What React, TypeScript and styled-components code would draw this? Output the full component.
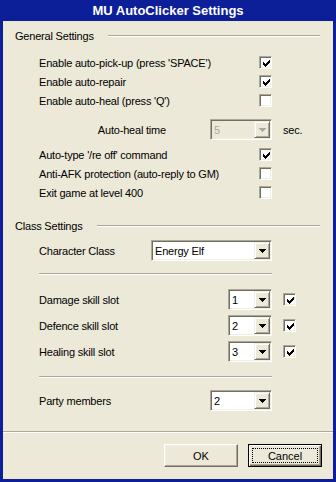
import React from 'react';
import styled, { createGlobalStyle } from 'styled-components';

const GlobalStyle = createGlobalStyle`
  html, body {
    margin: 0;
    padding: 0;
  }
  body {
    font-family: 'Liberation Sans', Arial, sans-serif;
    font-size: 11px;
  }
`;

const Window = styled.div`
  box-sizing: border-box;
  width: 336px;
  height: 482px;
  display: flex;
  flex-direction: column;
  padding: 0 3px 3px;
  background: #0c1e98;
`;

const TitleBar = styled.div`
  height: 21px;
  display: flex;
  align-items: center;
  justify-content: center;
  color: #ffffff;
  font-family: 'Liberation Sans', Arial, sans-serif;
  font-weight: 700;
  font-size: 13px;
`;

const Client = styled.div`
  flex: 1;
  display: flex;
  flex-direction: column;
  padding-top: 7px;
  background: #ece9d8;
  color: #000000;
  letter-spacing: -0.2px;
`;

const Etched = styled.div<{ $top?: number; $right?: number }>`
  height: 0;
  margin-top: ${p => p.$top ?? 0}px;
  margin-right: ${p => p.$right ?? 0}px;
  border-top: 1px solid #aca899;
  border-bottom: 1px solid #ffffff;
`;

const GroupHeader = styled.div<{ $top?: number }>`
  display: flex;
  align-items: center;
  gap: 14px;
  height: 15px;
  margin-top: ${p => p.$top ?? 0}px;
  padding: 0 13px 0 12px;
`;

const GroupLine = styled(Etched)`
  flex: 1;
`;

const Section = styled.div<{ $top?: number }>`
  display: flex;
  flex-direction: column;
  margin-top: ${p => p.$top ?? 0}px;
  padding: 0 27px 0 36px;
`;

const Row = styled.div<{ $height?: number; $top?: number }>`
  display: grid;
  grid-template-columns: 1fr auto 34px;
  align-items: center;
  height: ${p => p.$height ?? 19}px;
  margin-top: ${p => p.$top ?? 0}px;
`;

const Label = styled.span<{ $right?: boolean }>`
  white-space: nowrap;
  text-align: ${p => (p.$right ? 'right' : 'left')};
  padding-right: ${p => (p.$right ? 44 : 0)}px;
`;

const Extra = styled.span`
  display: flex;
  align-items: center;
  padding-left: 11px;
`;

const sunken = `
  border-style: solid;
  border-width: 1px;
  border-color: #aca899 #ffffff #ffffff #aca899;
  box-shadow: inset 1px 1px #716f64, inset -1px -1px #f1efe2;
`;

const Box = styled.span`
  box-sizing: border-box;
  display: block;
  width: 13px;
  height: 13px;
  padding: 2px;
  background: #ffffff;
  justify-self: end;
  ${sunken}

  svg {
    display: block;
    margin: 1px 0 0 1px;
  }
`;

const CHECK = ['......X', '.....XX', 'X...XXX', 'XX.XXX.', 'XXXXX..', '.XXX...', '..X....'];

const CheckMark: React.FC = () => (
  <svg width="7" height="7" viewBox="0 0 7 7" shapeRendering="crispEdges">
    {CHECK.flatMap((line, y) =>
      line.split('').map((c, x) => (c === 'X' ? <rect key={`${x}-${y}`} x={x} y={y} width="1" height="1" fill="#000" /> : null))
    )}
  </svg>
);

const Checkbox: React.FC<{ checked?: boolean }> = ({ checked }) => <Box>{checked && <CheckMark />}</Box>;

const ComboBox = styled.div<{ $width: number; $disabled?: boolean }>`
  box-sizing: border-box;
  display: flex;
  width: ${p => p.$width}px;
  height: 21px;
  background: ${p => (p.$disabled ? '#ece9d8' : '#ffffff')};
  color: ${p => (p.$disabled ? '#aca899' : '#000000')};
  ${sunken}
  border-width: 1px;
  padding: 1px;
`;

const ComboValue = styled.span`
  flex: 1;
  display: flex;
  align-items: center;
  padding-left: 2px;
  white-space: nowrap;
`;

const DropButton = styled.span<{ $disabled?: boolean }>`
  box-sizing: border-box;
  display: flex;
  align-items: center;
  justify-content: center;
  width: 16px;
  background: #ece9d8;
  border-style: solid;
  border-width: 1px;
  border-color: #f1efe2 #716f64 #716f64 #f1efe2;
  box-shadow: inset 1px 1px #ffffff, inset -1px -1px #aca899;
  color: ${p => (p.$disabled ? '#aca899' : '#000000')};

  svg {
    display: block;
  }
`;

const Combo: React.FC<{ width: number; value: string; disabled?: boolean }> = ({ width, value, disabled }) => (
  <ComboBox $width={width} $disabled={disabled}>
    <ComboValue>{value}</ComboValue>
    <DropButton $disabled={disabled}>
      <svg width="7" height="4" viewBox="0 0 7 4" shapeRendering="crispEdges">
        <path d="M0 0h7v1h-1v1h-1v1h-1v1h-1v-1h-1v-1h-1v-1h-1z" fill="currentColor" />
      </svg>
    </DropButton>
  </ComboBox>
);

const Footer = styled.div`
  margin-top: auto;
  display: flex;
  flex-direction: column;
`;

const ButtonRow = styled.div`
  display: flex;
  justify-content: flex-end;
  gap: 10px;
  padding: 11px 11px 12px;
`;

const Button = styled.button<{ $default?: boolean }>`
  box-sizing: border-box;
  width: 74px;
  height: 23px;
  padding: 0;
  background: #ece9d8;
  color: #000000;
  font-family: 'Liberation Sans', Arial, sans-serif;
  font-size: 11px;
  border-style: solid;
  border-width: 1px;
  border-color: ${p => (p.$default ? '#000000' : '#ffffff #716f64 #716f64 #ffffff')};
  box-shadow: ${p =>
    p.$default
      ? 'inset 1px 1px #ffffff, inset -1px -1px #716f64, inset -2px -2px #aca899'
      : 'inset -1px -1px #aca899, inset 1px 1px #f1efe2'};
  outline: ${p => (p.$default ? '1px dotted #000000' : 'none')};
  outline-offset: -5px;
`;

const checkRows1 = [
  { label: "Enable auto-pick-up (press 'SPACE')", checked: true },
  { label: 'Enable auto-repair', checked: true },
  { label: "Enable auto-heal (press 'Q')", checked: false },
];

const checkRows2 = [
  { label: "Auto-type '/re off' command", checked: true },
  { label: 'Anti-AFK protection (auto-reply to GM)', checked: false },
  { label: 'Exit game at level 400', checked: false },
];

const skillRows = [
  { label: 'Damage skill slot', value: '1', top: 14 },
  { label: 'Defence skill slot', value: '2', top: 5 },
  { label: 'Healing skill slot', value: '3', top: 5 },
];

export default function App() {
  return (
    <>
      <GlobalStyle />
      <Window>
        <TitleBar>MU AutoClicker Settings</TitleBar>
        <Client>
          <GroupHeader>
            <span>General Settings</span>
            <GroupLine />
          </GroupHeader>
          <Section $top={10}>
            {checkRows1.map(r => (
              <Row key={r.label}>
                <Label>{r.label}</Label>
                <Checkbox checked={r.checked} />
                <span />
              </Row>
            ))}
            <Row $height={21} $top={9}>
              <Label $right>Auto-heal time</Label>
              <Combo width={62} value="5" disabled />
              <Extra>sec.</Extra>
            </Row>
            {checkRows2.map((r, i) => (
              <Row key={r.label} $top={i === 0 ? 5 : 0}>
                <Label>{r.label}</Label>
                <Checkbox checked={r.checked} />
                <span />
              </Row>
            ))}
          </Section>

          <GroupHeader $top={16}>
            <span>Class Settings</span>
            <GroupLine />
          </GroupHeader>
          <Section $top={7}>
            <Row $height={21}>
              <Label>Character Class</Label>
              <Combo width={121} value="Energy Elf" />
              <span />
            </Row>
            <Etched $top={12} $right={34} />
            {skillRows.map(r => (
              <Row key={r.label} $height={21} $top={r.top}>
                <Label>{r.label}</Label>
                <Combo width={44} value={r.value} />
                <Extra>
                  <Checkbox checked />
                </Extra>
              </Row>
            ))}
            <Etched $top={14} $right={34} />
            <Row $height={21} $top={12}>
              <Label>Party members</Label>
              <Combo width={62} value="2" />
              <span />
            </Row>
          </Section>

          <Footer>
            <Etched />
            <ButtonRow>
              <Button>OK</Button>
              <Button $default>Cancel</Button>
            </ButtonRow>
          </Footer>
        </Client>
      </Window>
    </>
  );
}
